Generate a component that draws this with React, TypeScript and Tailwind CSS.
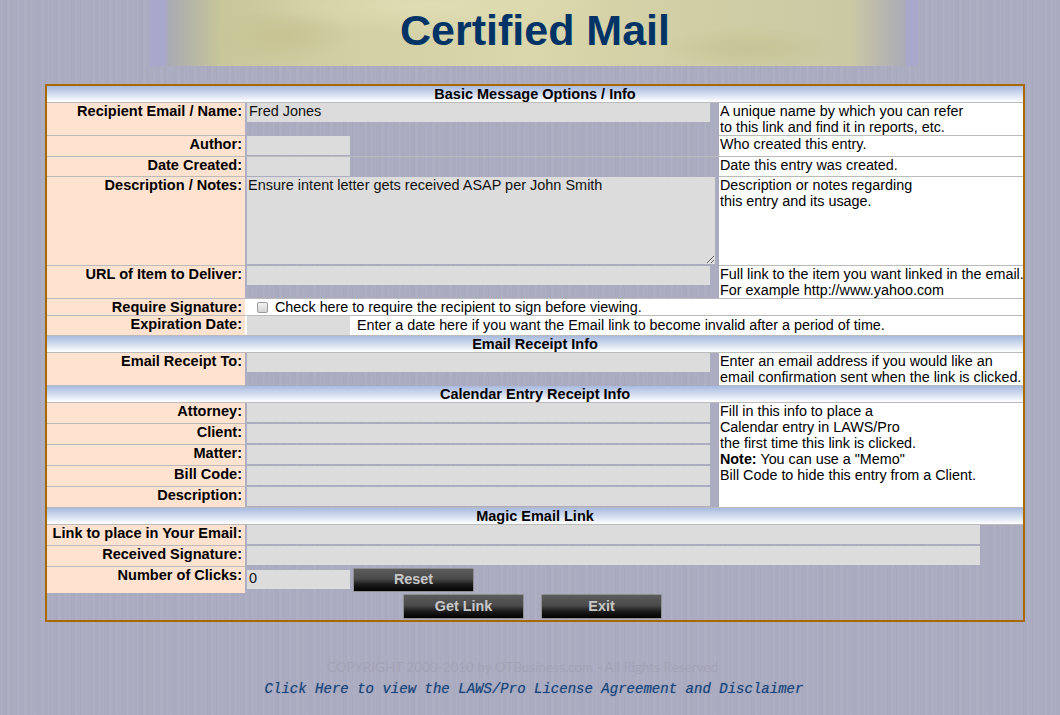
import type { ReactNode } from 'react'

const stripes =
  'bg-[repeating-linear-gradient(90deg,#aaaac0_0px,#afafc4_2px,#a8a8be_3px,#adadc2_5px,#a7a7bd_6px,#b0b0c5_8px,#ababc0_11px,#a9a9bf_13px,#aeaec3_14px,#aaaac0_17px)]'

const fieldClass = 'block h-[19px] border-0 bg-[#dcdcdc] px-[2px] pb-[0.5px] text-[14.45px] text-[#111] outline-none'

function SectionHeader({ title }: { title: string }) {
  return (
    <div className="h-[17px] border-b border-[#bbbbbb] bg-gradient-to-b from-[#a8badf] to-[#ffffff] text-center text-[14.5px] leading-[16px] font-bold text-black">
      {title}
    </div>
  )
}

function Label({ children, className = '' }: { children: ReactNode; className?: string }) {
  return (
    <div className={'w-[198px] shrink-0 border-b border-[#bbbbbb] bg-[#ffe3d0] pr-[3px] text-right text-[14.55px] leading-[16px] font-bold whitespace-nowrap text-black ' + className}>
      {children}
    </div>
  )
}

function Desc({ children }: { children: ReactNode }) {
  return (
    <div className="w-[304px] shrink-0 border-b border-[#bbbbbb] bg-white pl-[1px] text-[14.35px] leading-[16px] whitespace-nowrap text-black">
      {children}
    </div>
  )
}

function Row({ label, height, desc, children, line = true }: { label: string; height: string; desc: ReactNode; children: ReactNode; line?: boolean }) {
  return (
    <div className={'flex ' + height}>
      <Label>{label}</Label>
      <div className={'w-[474px] shrink-0 pl-[2px] ' + (line ? 'border-b border-[#bbbbbb]' : '')}>{children}</div>
      <Desc>{desc}</Desc>
    </div>
  )
}

function CalendarRow({ label, last }: { label: string; last?: boolean }) {
  return (
    <div className="flex h-[21px]">
      <Label>{label}</Label>
      <div className={'flex-1 pl-[2px] ' + (last ? 'border-b border-[#bbbbbb]' : '')}>
        <input className={fieldClass + ' w-[463px]'} readOnly />
      </div>
    </div>
  )
}

function DarkButton({ children, className = 'h-[25px]' }: { children: ReactNode; className?: string }) {
  return (
    <button
      type="button"
      className={'w-[121px] rounded-[1px] border border-[#8f8f8f] bg-[linear-gradient(180deg,#5c5c5c_0%,#4a4a4a_45%,#1c1c1c_70%,#000000_100%)] text-[14.4px] font-bold text-[#c8c8c8] ' + className}
    >
      {children}
    </button>
  )
}

export default function App() {
  return (
    <div className={'h-[715px] w-[1060px] overflow-hidden font-["Liberation_Sans",Arial,sans-serif] ' + stripes}>
      <header className="ml-[150px] flex h-[66px] w-[768px] items-center justify-center bg-[radial-gradient(ellipse_70px_26px_at_130px_36px,#c7c392_0%,transparent_100%),radial-gradient(ellipse_180px_28px_at_280px_6px,#e0ddb4_0%,transparent_100%),radial-gradient(ellipse_90px_22px_at_600px_48px,#c6c395_0%,transparent_100%),linear-gradient(90deg,#a8a8cc_0px,#a8a8cc_15px,#aaaab2_19px,#b8b8a6_46px,#c8c69a_70px,#d2cfa4_200px,#dad7ac_380px,#d2cfa6_520px,#cbc9a4_701px,#b9b8ae_730px,#ababb8_755px,#a8a8cc_757px,#a8a8cc_768px)]">
        <h1 className="pb-[5px] pl-[2px] text-[43px] leading-none font-bold text-[#003366]">Certified Mail</h1>
      </header>

      <main className="mt-[18px] ml-[45px] h-[538px] w-[980px] border-2 border-[#a86a00]">
        <SectionHeader title="Basic Message Options / Info" />
        <Row
          label="Recipient Email / Name:"
          height="h-[33px]"
          line={false}
          desc={<>A unique name by which you can refer<br />to this link and find it in reports, etc.</>}
        >
          <input className={fieldClass + ' w-[463px]'} defaultValue="Fred Jones" readOnly />
        </Row>
        <Row label="Author:" height="h-[21px]" desc="Who created this entry.">
          <input className={fieldClass + ' w-[103px]'} readOnly />
        </Row>
        <Row label="Date Created:" height="h-[20px]" line={false} desc="Date this entry was created.">
          <input className={fieldClass + ' w-[103px]'} readOnly />
        </Row>
        <Row
          label="Description / Notes:"
          height="h-[89px]"
          line={false}
          desc={<>Description or notes regarding<br />this entry and its usage.</>}
        >
          <textarea
            className="block h-[87px] w-[468px] resize border-0 bg-[#dcdcdc] px-[1px] text-[14.48px] leading-[16px] text-[#111] outline-none"
            defaultValue="Ensure intent letter gets received ASAP per John Smith"
            readOnly
          />
        </Row>
        <Row
          label="URL of Item to Deliver:"
          height="h-[33px]"
          desc={<>Full link to the item you want linked in the email.<br />For example http://www.yahoo.com</>}
        >
          <input className={fieldClass + ' w-[463px]'} readOnly />
        </Row>

        <div className="flex h-[17px]">
          <Label>Require Signature:</Label>
          <div className="flex flex-1 items-center border-b border-[#bbbbbb] bg-white pl-[12px] text-[14.35px] leading-[16px] text-black">
            <input type="checkbox" className="m-0 h-[11px] w-[11px] appearance-none rounded-[2px] border border-[#9a9a9a] bg-gradient-to-b from-[#f2f2f2] to-[#d4d4d4]" disabled />
            <span className="ml-[7px]">Check here to require the recipient to sign before viewing.</span>
          </div>
        </div>
        <div className="flex h-[20px]">
          <Label>Expiration Date:</Label>
          <div className="flex flex-1 border-b border-[#bbbbbb] bg-white pl-[2px] text-[14.35px] leading-[18px] text-black">
            <input className={fieldClass + ' w-[103px]'} readOnly />
            <span className="ml-[7px]">Enter a date here if you want the Email link to become invalid after a period of time.</span>
          </div>
        </div>

        <SectionHeader title="Email Receipt Info" />
        <Row
          label="Email Receipt To:"
          height="h-[33px]"
          line={false}
          desc={<>Enter an email address if you would like an<br />email confirmation sent when the link is clicked.</>}
        >
          <input className={fieldClass + ' w-[463px]'} readOnly />
        </Row>

        <SectionHeader title="Calendar Entry Receipt Info" />
        <div className="flex h-[105px]">
          <div className="w-[672px] shrink-0">
            <CalendarRow label="Attorney:" />
            <CalendarRow label="Client:" />
            <CalendarRow label="Matter:" />
            <CalendarRow label="Bill Code:" />
            <CalendarRow label="Description:" last />
          </div>
          <Desc>
            Fill in this info to place a<br />
            Calendar entry in LAWS/Pro<br />
            the first time this link is clicked.<br />
            <b>Note:</b> You can use a "Memo"<br />
            Bill Code to hide this entry from a Client.
          </Desc>
        </div>

        <SectionHeader title="Magic Email Link" />
        <div className="flex h-[21px]">
          <Label>Link to place in Your Email:</Label>
          <div className="pl-[2px]">
            <input className={fieldClass + ' w-[733px]'} readOnly />
          </div>
        </div>
        <div className="flex h-[21px]">
          <Label>Received Signature:</Label>
          <div className="pl-[2px]">
            <input className={fieldClass + ' w-[733px]'} readOnly />
          </div>
        </div>
        <div className="flex h-[26px]">
          <Label className="border-b-0">Number of Clicks:</Label>
          <div className="flex items-start pl-[2px]">
            <input className={fieldClass + ' mt-[3px] w-[103px]'} defaultValue="0" readOnly />
            <div className="ml-[3px]">
              <DarkButton className="mt-[1px] h-[24px] pb-[1px]">Reset</DarkButton>
            </div>
          </div>
        </div>
        <div className="mt-[1px] flex justify-center gap-[17px] pr-[5px]">
          <DarkButton>Get Link</DarkButton>
          <DarkButton>Exit</DarkButton>
        </div>
      </main>

      <footer className="ml-[45px] w-[980px] text-center">
        <p className="mt-[36px] pr-[25px] font-['Lato',sans-serif] text-[13.5px] leading-[18px] text-[#a3a3b6]">
          COPYRIGHT 2000-2010 by OTBusiness.com - All Rights Reserved
        </p>
        <a className="mt-[4px] block pr-[2px] font-['Liberation_Mono',monospace] text-[14.04px] leading-[18px] text-[#17457c] italic [text-shadow:0_0_1px_#17457c80]">
          Click Here to view the LAWS/Pro License Agreement and Disclaimer
        </a>
      </footer>
    </div>
  )
}
